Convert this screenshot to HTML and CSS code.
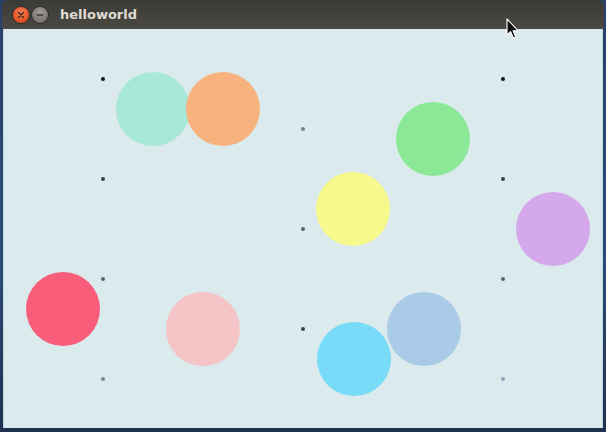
FILE: index.html
```html
<!DOCTYPE html>
<html>
<head>
<meta charset="utf-8">
<link rel="stylesheet" href="styles.css">
</head>
<body>
<div class="desktop">
  <div class="window">
    <div class="titlebar">
      <div class="buttons">
        <span class="btn close"><svg width="16" height="16" viewBox="0 0 16 16"><path d="M5.5 5.5 L10.5 10.5 M10.5 5.5 L5.5 10.5" stroke="#3a2418" stroke-width="1.4" stroke-linecap="round"/></svg></span>
        <span class="btn min"><svg width="16" height="16" viewBox="0 0 16 16"><path d="M4.8 8 H11.2" stroke="#2e2d2a" stroke-width="1.4"/></svg></span>
      </div>
      <span class="title">helloworld</span>
    </div>
    <div class="canvas">
      <span class="dot d1" style="left:97px;top:48px"></span>
      <span class="dot d2" style="left:97px;top:148px"></span>
      <span class="dot d3" style="left:97px;top:248px"></span>
      <span class="dot d4" style="left:97px;top:348px"></span>
      <span class="dot d4" style="left:297px;top:98px"></span>
      <span class="dot d3" style="left:297px;top:198px"></span>
      <span class="dot d2" style="left:297px;top:298px"></span>
      <span class="dot d1" style="left:497px;top:48px"></span>
      <span class="dot d2" style="left:497px;top:148px"></span>
      <span class="dot d3" style="left:497px;top:248px"></span>
      <span class="dot d5" style="left:497px;top:348px"></span>

      <span class="circle teal" style="left:112px;top:43px"></span>
      <span class="circle orange" style="left:182px;top:43px"></span>
      <span class="circle green" style="left:392px;top:73px"></span>
      <span class="circle yellow" style="left:312px;top:143px"></span>
      <span class="circle purple" style="left:512px;top:163px"></span>
      <span class="circle red" style="left:22px;top:243px"></span>
      <span class="circle pink" style="left:162px;top:263px"></span>
      <span class="circle blue" style="left:383px;top:263px"></span>
      <span class="circle cyan" style="left:313px;top:293px"></span>
    </div>
  </div>
  <svg class="cursor" width="14" height="22" viewBox="0 0 14 22"><path d="M1 1 L1 17 L4.6 13.6 L7.4 20 L9.8 19 L7.1 12.8 L12 12.6 Z" fill="#111" stroke="#fff" stroke-width="1.1" stroke-linejoin="round"/></svg>
</div>
</body>
</html>
```
FILE: styles.css
```css
html, body {
  margin: 0;
  padding: 0;
}
body {
  width: 606px;
  height: 432px;
  overflow: hidden;
  background: #1e3556;
}
.desktop {
  position: relative;
  width: 606px;
  height: 432px;
  background: linear-gradient(180deg, #27416a 0%, #2c4c78 60%, #1d3150 100%);
  padding: 0 3px 4px 3px;
  box-sizing: border-box;
}
.window {
  display: flex;
  flex-direction: column;
  height: 100%;
}
.titlebar {
  height: 29px;
  margin: 0 -1px;
  background: linear-gradient(180deg, #3b3a36 0%, #43413c 50%, #4b4944 100%);
  border-radius: 6px 6px 0 0;
  display: flex;
  align-items: center;
  padding-left: 11px;
  padding-top: 1px;
  box-sizing: border-box;
  flex-shrink: 0;
}
.buttons {
  display: flex;
  gap: 3px;
}
.btn {
  width: 16px;
  height: 16px;
  border-radius: 50%;
  display: block;
}
.btn svg { display: block; }
.close {
  background: radial-gradient(circle at 50% 35%, #f8845a 0%, #e9582a 55%, #c4441c 100%);
  box-shadow: 0 0 0 1px #2f2d2a;
}
.min {
  background: radial-gradient(circle at 50% 35%, #a09d96 0%, #7d7a74 60%, #605e59 100%);
  box-shadow: 0 0 0 1px #2f2d2a;
}
.title {
  margin-left: 12px;
  font-family: "DejaVu Sans", sans-serif;
  font-weight: bold;
  font-size: 13px;
  color: #dfdbd2;
  line-height: 1;
  margin-top: -1px;
}
.canvas {
  position: relative;
  flex: 1;
  background: #daeaed;
  border-left: 1px solid #c6d8de;
  border-right: 1px solid #c6d8de;
}
.dot {
  position: absolute;
  width: 4px;
  height: 4px;
  border-radius: 50%;
}
.d1 { background: #0e141a; }
.d2 { background: #36424c; }
.d3 { background: #56636e; }
.d4 { background: #77848f; }
.d5 { background: #8da4b8; }
.circle {
  position: absolute;
  width: 74px;
  height: 74px;
  border-radius: 50%;
}
.teal { background: #a7e8d8; }
.orange { background: #f8b27e; }
.green { background: #8be897; }
.yellow { background: #f8f98c; }
.purple { background: #d5a8ec; }
.red { background: #f85d79; }
.pink { background: #f5c4c6; }
.blue { background: #a9cbe8; }
.cyan { background: #78dbf7; }
.cursor {
  position: absolute;
  left: 506px;
  top: 18px;
}
```
